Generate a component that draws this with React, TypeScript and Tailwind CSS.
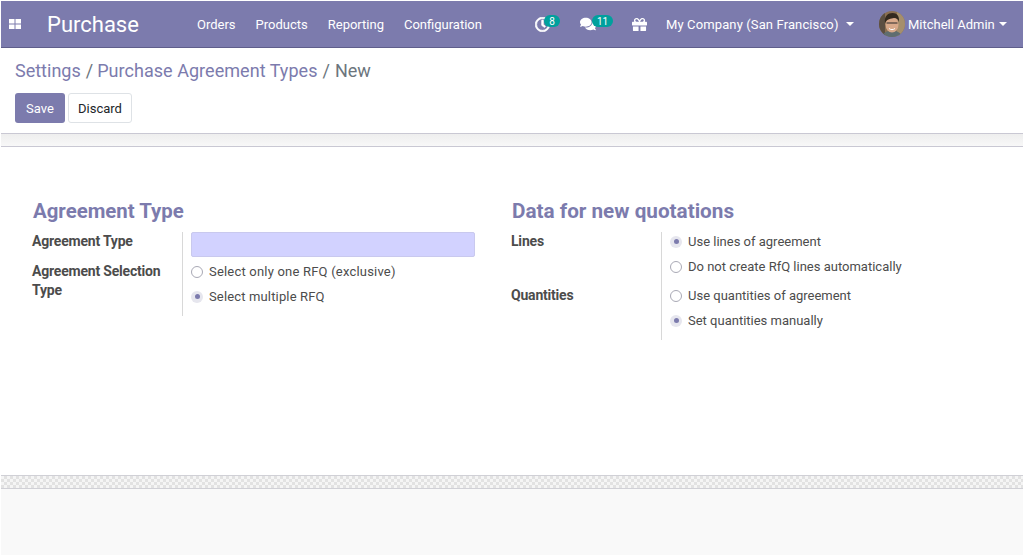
import { FaComments, FaGift, FaRegClock } from 'react-icons/fa';

const menu = ['Orders', 'Products', 'Reporting', 'Configuration'];

function Radio({ label, checked, className = '' }: { label: string; checked?: boolean; className?: string }) {
  return (
    <div className={`flex h-[25px] items-center whitespace-nowrap text-[13px] leading-[25px] text-[#4c4c4c] ${className}`}>
      {checked ? (
        <span className="mr-[6px] flex h-3 w-3 items-center justify-center rounded-full bg-[#e6e6ee]">
          <span className="h-[5px] w-[5px] rounded-full bg-[#7c7bad]"></span>
        </span>
      ) : (
        <span className="mr-[6px] h-3 w-3 rounded-full border border-[#a9a9b5] bg-white"></span>
      )}
      {label}
    </div>
  );
}

function FieldLabel({ children, className = '' }: { children: React.ReactNode; className?: string }) {
  return (
    <div className={`w-[150px] pr-2 text-[14px] font-bold leading-[19px] tracking-[-0.2px] text-[#4c4c4c] ${className}`}>
      {children}
    </div>
  );
}

function Avatar() {
  return (
    <svg viewBox="0 0 26 26" className="h-[26px] w-[26px] shrink-0 rounded-full">
      <rect width="26" height="26" fill="#8a6f52" />
      <rect x="18" width="8" height="26" fill="#a58f6c" />
      <rect width="6" height="26" fill="#5c4f42" />
      <path d="M3 26c1-5 5-6 10-6s9 1 10 6z" fill="#5f6d70" />
      <ellipse cx="13" cy="13.500" rx="6.500" ry="8" fill="#d8a98a" />
      <path d="M6 12C5 5 9 2 13.500 2s7 3 6.500 9c-1-2.500-2-4-5-4-3 .5-7 1-9 5z" fill="#33291f" />
      <path d="M7.500 12h4.500M14 12h4.500M12 12h2" stroke="#2a2a2a" strokeWidth="1.200" />
      <path d="M10 17.500c2 1.500 4 1.500 6 0" stroke="#fff" strokeWidth="1" fill="none" />
    </svg>
  );
}

export default function App() {
  return (
    <div className="flex h-[555px] w-[1023px] flex-col overflow-hidden bg-white pl-px pt-px font-['Roboto','Liberation_Sans',sans-serif]">
      <nav className="flex h-[47px] shrink-0 items-center whitespace-nowrap border-b border-[#5f5e8b] bg-[#7c7bad] text-white">
        <svg viewBox="0 0 12 10" className="ml-[8px] h-[10px] w-3 shrink-0 fill-white">
          <rect width="5.500" height="4.500" />
          <rect x="6.500" width="5.500" height="4.500" />
          <rect y="5.500" width="5.500" height="4.500" />
          <rect x="6.500" y="5.500" width="5.500" height="4.500" />
        </svg>
        <span className="ml-[26px] mt-px w-[150px] shrink-0 text-[22px] leading-none">Purchase</span>
        <div className="mt-px flex w-[285px] shrink-0 gap-5 text-[13px]">
          {menu.map((item) => (
            <span key={item}>{item}</span>
          ))}
        </div>
        <div className="relative ml-[53px] flex h-full w-[45px] shrink-0 items-center">
          <FaRegClock className="h-[15px] w-[15px] stroke-white stroke-[24]" />
          <span className="absolute left-[9px] top-[14px] flex h-[12px] w-[16px] items-center justify-center rounded-full bg-[#00a09d] text-[10px]">8</span>
        </div>
        <div className="relative flex h-full w-[52px] shrink-0 items-center">
          <FaComments className="h-[16px] w-[16px]" />
          <span className="absolute left-[12px] top-[14px] flex h-[12px] w-[21px] items-center justify-center rounded-full bg-[#00a09d] text-[10px]">11</span>
        </div>
        <FaGift className="h-[15px] w-[15px] shrink-0" />
        <span className="ml-[19px] mt-px w-[172px] shrink-0 text-[13px] tracking-[0.12px]">My Company (San Francisco)</span>
        <span className="ml-[8px] h-0 w-0 border-x-[4px] border-t-[4px] border-x-transparent border-t-white"></span>
        <span className="ml-[25px]">
          <Avatar />
        </span>
        <span className="ml-[3px] mt-px w-[85px] shrink-0 text-[13px]">Mitchell Admin</span>
        <span className="ml-[6px] h-0 w-0 border-x-[4px] border-t-[4px] border-x-transparent border-t-white"></span>
      </nav>

      <div className="flex h-[85px] shrink-0 flex-col px-[14px]">
        <div className="mt-[10px] flex h-[25px] items-center gap-[5px] text-[18px] text-[#7c7bad]">
          <span>Settings</span>
          <span className="text-[#6c757d]">/</span>
          <span className="-ml-px tracking-[0.04px]">Purchase Agreement Types</span>
          <span className="text-[#6c757d]">/</span>
          <span className="text-[#6c757d]">New</span>
        </div>
        <div className="mt-[10px] flex gap-[3px] text-[13px]">
          <button className="h-[30px] w-[50px] rounded-[3px] bg-[#7c7bad] pt-px text-white">Save</button>
          <button className="h-[30px] w-[64px] rounded-[3px] border border-[#dee2e6] bg-white pt-px text-[#212529]">Discard</button>
        </div>
      </div>

      <div className="h-[14px] shrink-0 border-y border-[#c9c8d3] bg-gradient-to-b from-[#eeeeee] to-[#f8f8f8]"></div>

      <main className="flex h-[328px] shrink-0 bg-white pt-[50px]">
        <section className="ml-[31px] w-[479px]">
          <h2 className="ml-px h-[35px] whitespace-nowrap text-[20.4px] font-bold leading-[28px] text-[#7c7bad]">Agreement Type</h2>
          <div className="flex">
            <div className="w-[150px]">
              <FieldLabel className="h-[30px]">Agreement Type</FieldLabel>
              <FieldLabel>Agreement Selection Type</FieldLabel>
            </div>
            <div className="h-[84px] w-[293px] border-l border-[#d8d8d8] pl-2">
              <div className="h-[25px] w-[284px] rounded-[2px] border border-[#c9c9ee] bg-[#d2d2ff]"></div>
              <div className="mt-[2px]">
                <Radio label="Select only one RFQ (exclusive)" className="tracking-[0.2px]" />
                <Radio label="Select multiple RFQ" className="tracking-[0.15px]" checked />
              </div>
            </div>
          </div>
        </section>
        <section className="w-[480px]">
          <h2 className="ml-px h-[35px] whitespace-nowrap text-[20.7px] font-bold leading-[28px] text-[#7c7bad]">Data for new quotations</h2>
          <div className="flex">
            <div className="w-[150px]">
              <FieldLabel className="h-[54px]">Lines</FieldLabel>
              <FieldLabel>Quantities</FieldLabel>
            </div>
            <div className="h-[108px] border-l border-[#d8d8d8] pl-2">
              <div className="-mt-[3px]">
                <div className="h-[54px]">
                  <Radio label="Use lines of agreement" checked />
                  <Radio label="Do not create RfQ lines automatically" />
                </div>
                <Radio label="Use quantities of agreement" />
                <Radio label="Set quantities manually" checked />
              </div>
            </div>
          </div>
        </section>
      </main>

      <div className="h-[14px] shrink-0 border-y border-[#d0d0d6] bg-[repeating-conic-gradient(#e2e2e2_0%_25%,#f5f5f5_0%_50%)] bg-size-[6px_6px]"></div>
      <div className="flex-1 bg-[#f9f9f9]"></div>
    </div>
  );
}
